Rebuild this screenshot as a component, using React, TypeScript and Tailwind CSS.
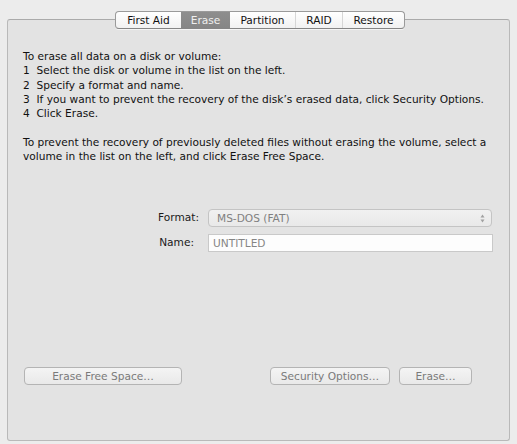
import React from "react";

const font = { fontFamily: '"DejaVu Sans", "Noto Sans", sans-serif' };

function Tabs() {
  const tabs = [
    { label: "First Aid", w: 65 },
    { label: "Erase", w: 49, active: true },
    { label: "Partition", w: 65 },
    { label: "RAID", w: 47 },
    { label: "Restore", w: 62 },
  ];
  return (
    <div className="absolute left-[115px] top-[11px] flex h-[18px] overflow-hidden rounded-[4px] border border-[#9a9a9a] border-b-[#858585] bg-gradient-to-b from-[#ffffff] to-[#f1f1f1] shadow-[0_1px_0_rgba(255,255,255,0.6)]">
      {tabs.map((t, i) => (
        <div
          key={t.label}
          style={{ width: t.w }}
          className={
            "flex items-center justify-center text-[10.6px] leading-none " +
            (t.active
              ? "bg-gradient-to-b from-[#8e8e8e] to-[#868686] text-[#efefef]"
              : "text-[#111111]") +
            (i > 0 && !t.active && !tabs[i - 1].active ? " border-l border-[#d6d6d6]" : "")
          }
        >
          {t.label}
        </div>
      ))}
    </div>
  );
}

function Btn({ label, w }: { label: string; w: number }) {
  return (
    <div
      style={{ width: w }}
      className="flex h-[18px] items-center justify-center rounded-[4px] border border-[#b4b4b4] bg-gradient-to-b from-[#f4f4f4] to-[#e9e9e9] text-[10.6px] leading-none text-[#7a7a7a]"
    >
      {label}
    </div>
  );
}

export default function App() {
  return (
    <div style={font} className="relative h-[444px] w-[517px] overflow-hidden bg-[#ececec]">
      <div className="flex flex-col px-[7px] pt-[19px]">
        <div className="flex h-[422px] flex-col rounded-[3px] border border-[#b9b9b9] border-t-[#aaaaaa] bg-[#e3e3e3]">
          <div className="mt-[29px] pl-[15px] text-[10.6px] leading-[14.25px] text-[#111111]">
            <div>To erase all data on a disk or volume:</div>
            <div>1&nbsp; Select the disk or volume in the list on the left.</div>
            <div>2&nbsp; Specify a format and name.</div>
            <div>3&nbsp; If you want to prevent the recovery of the disk’s erased data, click Security Options.</div>
            <div>4&nbsp; Click Erase.</div>
            <div className="h-[14.25px]" />
            <div>To prevent the recovery of previously deleted files without erasing the volume, select a</div>
            <div>volume in the list on the left, and click Erase Free Space.</div>
          </div>

          <div className="mt-[46px] flex flex-col gap-[7px]">
            <div className="flex items-center">
              <div className="w-[191px] text-right text-[10.6px] text-[#1a1a1a]">Format:</div>
              <div className="ml-[9px] flex h-[18px] w-[284px] items-center justify-between rounded-[4px] border border-[#c4c4c4] bg-gradient-to-b from-[#f1f1f1] to-[#e9e9e9] pl-[8px] pr-[6px] text-[10.6px] leading-none text-[#808080]">
                <span>MS-DOS (FAT)</span>
                <svg width="5" height="9" viewBox="0 0 5 9">
                  <path d="M2.5 0.5 L4.5 3.5 L0.5 3.5 Z" fill="#a0a0a0" />
                  <path d="M2.5 8.5 L4.5 5.5 L0.5 5.5 Z" fill="#a0a0a0" />
                </svg>
              </div>
            </div>
            <div className="flex items-center">
              <div className="w-[186px] text-right text-[10.6px] text-[#1a1a1a]">Name:</div>
              <div className="ml-[14px] flex h-[18px] w-[285px] items-center border border-[#c9c9c9] bg-[#fdfdfd] pl-[4px] text-[10.6px] leading-none text-[#858585]">
                UNTITLED
              </div>
            </div>
          </div>

          <div className="mt-[115px] flex pl-[16px]">
            <Btn label="Erase Free Space…" w={158} />
            <div className="ml-[88px]">
              <Btn label="Security Options…" w={120} />
            </div>
            <div className="ml-[9px]">
              <Btn label="Erase…" w={73} />
            </div>
          </div>
        </div>
      </div>
      <Tabs />
    </div>
  );
}
